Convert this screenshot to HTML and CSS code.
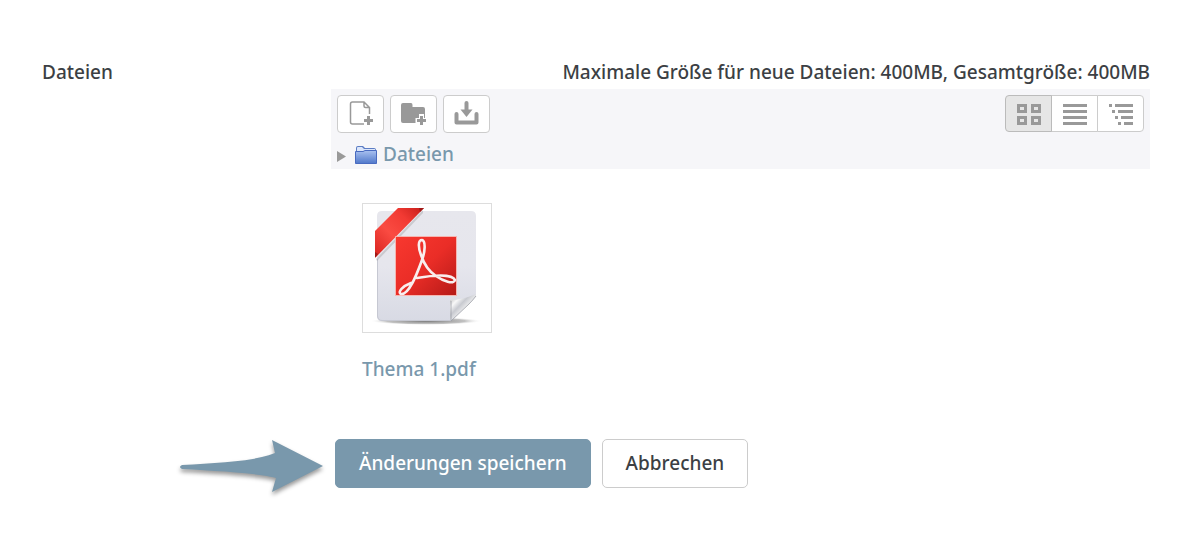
FILE: index.html
```html
<!DOCTYPE html>
<html lang="de">
<head>
    <meta charset="UTF-8">
    <meta name="viewport" content="width=device-width, initial-scale=1.0">
    <title>Dateien</title>
    <link rel="stylesheet" href="styles.css">
</head>
<body>
    <form class="file-form">
        <div class="label" id="files-label">Dateien</div>

        <div class="filemanager" role="group" aria-labelledby="files-label">
            <div class="restrictions">Maximale Größe für neue Dateien: 400MB, Gesamtgröße: 400MB</div>

            <div class="navbar">
                <div class="toolbar">
                    <div class="tools">
                        <button type="button" class="tool" aria-label="Datei hinzufügen">
                            <svg width="28" height="28" viewBox="0 0 28 28" fill="none" stroke="#999" stroke-width="1.5">
                                <path d="M17 24H5.500Q3.500 24 3.500 22V4Q3.500 2 5.500 2H17L22.500 7.500V14M17 2V6Q17 7.500 18.500 7.500H22.500"/>
                                <path d="M21.500 16V25M17 20.500H26" stroke-width="3"/>
                            </svg>
                        </button>
                        <button type="button" class="tool" aria-label="Verzeichnis erstellen">
                            <svg width="28" height="28" viewBox="0 0 28 28">
                                <path fill="#999" d="M3 3H11Q12.500 3 12.500 5V7H23Q25 7 25 9V23H3Q1 23 1 21V5Q1 3 3 3Z"/>
                                <path stroke="#fff" stroke-width="5" d="M21.500 14V27M15.500 20.500H28"/>
                                <path stroke="#999" stroke-width="3" d="M21.500 16V25M17 20.500H26"/>
                            </svg>
                        </button>
                        <button type="button" class="tool" aria-label="Alle herunterladen">
                            <svg width="28" height="28" viewBox="0 0 28 28" fill="none" stroke="#999" stroke-width="4">
                                <path d="M3.500 14V22.500H23.500V14" stroke-linecap="round" stroke-linejoin="round"/>
                                <path d="M13.500 3V12" stroke-linecap="round"/>
                                <path d="M7.500 9.500H19.500L13.500 17Z" fill="#999" stroke="none"/>
                            </svg>
                        </button>
                    </div>
                    <div class="views">
                        <button type="button" class="view active" aria-label="Symbole" aria-pressed="true">
                            <svg width="26" height="24" viewBox="0 0 26 24" fill="none" stroke="#999" stroke-width="3">
                                <path d="M2.500 3.500H9.500V9.500H2.500ZM16.500 3.500H23.500V9.500H16.500ZM2.500 15.500H9.500V21.500H2.500ZM16.500 15.500H23.500V21.500H16.500Z"/>
                            </svg>
                        </button>
                        <button type="button" class="view" aria-label="Liste" aria-pressed="false">
                            <svg width="26" height="24" viewBox="0 0 26 24" fill="none" stroke="#999" stroke-width="3">
                                <path d="M1 3.500H25M1 9.500H25M1 15.500H25M1 21.500H25"/>
                            </svg>
                        </button>
                        <button type="button" class="view" aria-label="Baum" aria-pressed="false">
                            <svg width="26" height="24" viewBox="0 0 26 24" fill="none" stroke="#999" stroke-width="3">
                                <path d="M1 3.500H4M7 3.500H25M4 9.500H7M10 9.500H25M7 15.500H10M13 15.500H25M10 21.500H13M16 21.500H25"/>
                            </svg>
                        </button>
                    </div>
                </div>

                <div class="path">
                    <svg class="path-arrow" width="10" height="16" viewBox="0 0 10 16"><path fill="#999" d="M0 5L9 10.500L0 16Z"/></svg>
                    <svg class="path-folder" width="22" height="20" viewBox="0 0 22 20">
                        <defs>
                            <linearGradient id="folder" x1="0" y1="0" x2="0" y2="1">
                                <stop offset="0" stop-color="#a9c1f0"/>
                                <stop offset="1" stop-color="#5078ca"/>
                            </linearGradient>
                        </defs>
                        <path fill="#5c7dc4" d="M1 19V4Q1 2 3 2H8L10 4H19Q21 4 21 6V19Z"/>
                        <path fill="#dbe6fb" d="M2 4Q2 3 3 3H7L9 5H20V7H2Z"/>
                        <path fill="url(#folder)" stroke="#496bc0" d="M.500 7.500H8L10 6.500H21.500V19.500H.500Z"/>
                    </svg>
                    <a href="#">Dateien</a>
                </div>
            </div>

            <a class="file" href="#">
                <span class="thumbnail">
                    <svg width="128" height="128" viewBox="0 0 128 128">
                        <defs>
                            <linearGradient id="paper" x1="0" y1="0" x2="0" y2="1">
                                <stop offset="0" stop-color="#e7e7ed"/>
                                <stop offset=".5" stop-color="#e6e6ed"/>
                                <stop offset="1" stop-color="#d8dae4"/>
                            </linearGradient>
                            <linearGradient id="red" x1="0" y1="0" x2="1" y2="1">
                                <stop offset="0" stop-color="#f8382f"/>
                                <stop offset=".5" stop-color="#ea2d27"/>
                                <stop offset="1" stop-color="#b51a18"/>
                            </linearGradient>
                            <linearGradient id="ribbon" x1="0" y1="1" x2="1" y2="0">
                                <stop offset="0" stop-color="#d8231f"/>
                                <stop offset=".4" stop-color="#fa4b42"/>
                                <stop offset=".7" stop-color="#f23a33"/>
                                <stop offset="1" stop-color="#c41c19"/>
                            </linearGradient>
                            <linearGradient id="curl" x1="0" y1="0" x2="1" y2="1">
                                <stop offset="0" stop-color="#aaa"/>
                                <stop offset=".25" stop-color="#f8f8f8"/>
                                <stop offset=".4" stop-color="#c8cad0"/>
                                <stop offset=".6" stop-color="#f5f5f5"/>
                            </linearGradient>
                            <radialGradient id="shade">
                                <stop offset="0" stop-color="#777"/>
                                <stop offset=".7" stop-color="#999" stop-opacity=".6"/>
                                <stop offset="1" stop-color="#fff" stop-opacity="0"/>
                            </radialGradient>
                        </defs>
                        <ellipse cx="63" cy="117" rx="56" ry="4" fill="url(#shade)"/>
                        <path fill="url(#paper)" d="M19 7H108Q113 7 113 12V92L88 117H19Q14 117 14 112V12Q14 7 19 7Z"/>
                        <path fill="none" stroke="#c6c8d2" d="M14.500 55V112Q15 116.500 19 116.500H88"/>
                        <path fill="url(#curl)" d="M87 117V96Q99 96 113 90V92Q110 96 106 100Z"/>
                        <path fill="none" stroke="#9b9da4" stroke-width=".8" d="M113 92Q110 96 106 100L88 117V97"/>
                        <path fill="#888" opacity=".3" d="M13 55L60 6V9L14 57Z"/>
                        <path fill="url(#ribbon)" d="M12 53V27L35 4H61L13 53Z"/>
                        <path fill="#9f1816" d="M12 48L15 50L12 54ZM56 4H61L57 8Z"/>
                        <path fill="url(#red)" stroke="#f6b5b0" d="M32.500 32.500H93.500V91.500H32.500Z"/>
                        <path fill="none" stroke="#f9eeee" stroke-width="2.600" stroke-linecap="round" stroke-linejoin="round" d="M48 79C40 82 34 88 38 90C46 91 54 70 59 56C62 48 63 37 59 36C55 36 55 43 58 51C61 60 65 67 73 72C80 77 91 81 92 76C90 71 77 70 54 74"/>
                    </svg>
                </span>
                <span class="filename">Thema 1.pdf</span>
            </a>
        </div>

        <svg class="pointer" width="150" height="62" viewBox="0 0 150 62" aria-hidden="true">
            <path fill="#7998ac" d="M5 26C40 24 75 23 98 14L95 1L146 27L95 53L99 39C80 34 40 32 5 30Q1 28 5 26Z"/>
        </svg>
        <div class="actions">
            <button type="submit" class="button primary">Änderungen speichern</button>
            <button type="button" class="button">Abbrechen</button>
        </div>
    </form>
</body>
</html>
```

FILE: styles.css
```css
* {
    box-sizing: border-box;
}

body {
    font-family: 'Noto Sans', 'Open Sans', sans-serif;
    font-size: 19px;
    font-weight: 500;
    line-height: 28px;
    margin: 0;
    background: #fff;
    color: #3c3f44;
}

a {
    color: #7998ac;
    text-decoration: none;
}

button {
    font: inherit;
    color: inherit;
    cursor: pointer;
}

svg {
    display: block;
    flex-shrink: 0;
}

.file-form {
    display: grid;
    grid-template-columns: 289px 1fr;
    row-gap: 56px;
    padding: 58px 50px 48px 42px;
}

.restrictions {
    text-align: right;
    margin-bottom: 3px;
}

/* Toolbar and breadcrumb */
.navbar {
    background: #f6f6f9;
    padding: 6px 6px 1px;
}

.toolbar {
    display: flex;
    justify-content: space-between;
    margin-bottom: 7px;
}

.tools {
    display: flex;
    gap: 6px;
}

.tool,
.view {
    display: flex;
    align-items: center;
    justify-content: center;
    width: 47px;
    height: 38px;
    padding: 0;
    background: #fff;
    border: 1px solid #ccc;
    border-radius: 4px;
}

.views {
    display: flex;
}

.view {
    height: 37px;
    border-radius: 0;
    margin-left: -1px;
}

.view:first-child {
    border-radius: 4px 0 0 4px;
}

.view:last-child {
    border-radius: 0 4px 4px 0;
}

.view.active {
    background: #e6e6e6;
    border-color: #bbb;
    z-index: 1;
}

.path {
    display: flex;
    align-items: center;
}

.path-folder {
    margin: 0 6px 0 8px;
}

/* File list */
.file {
    display: inline-block;
    margin: 34px 0 0 31px;
}

.thumbnail {
    display: block;
    width: 130px;
    border: 1px solid #ddd;
    background: #fff;
}

.filename {
    display: block;
    margin-top: 22px;
}

/* Form buttons */
.pointer {
    justify-self: end;
    margin-right: 4px;
    filter: drop-shadow(0 3px 2px rgba(0, 0, 0, 0.4));
}

.actions {
    display: flex;
    align-items: flex-start;
    gap: 11px;
    padding-left: 4px;
}

.button {
    padding: 9px 23px 10px;
    background: #fff;
    border: 1px solid #ccc;
    border-radius: 5px;
}

.button.primary {
    background: #7998ac;
    border-color: #7998ac;
    color: #fff;
}
```
